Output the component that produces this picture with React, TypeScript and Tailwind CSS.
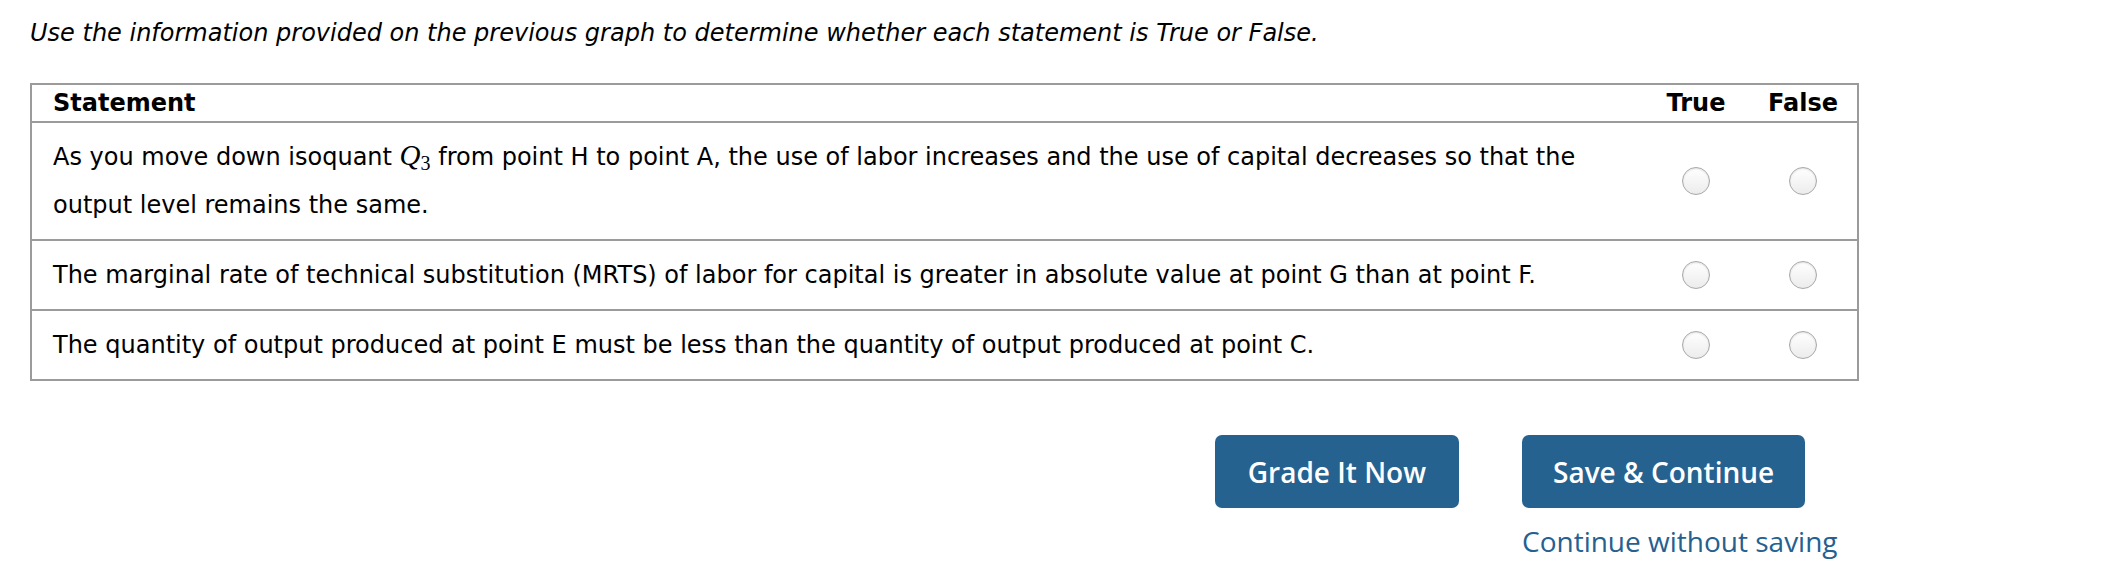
import React from 'react'

const rows = [
  {
    id: 'r1',
    text: (
      <>
        As you move down isoquant{' '}
        <span className="font-['Liberation_Serif',serif] text-[29px] leading-none">
          <i>Q</i>
          <sub className="text-[20px] not-italic leading-none">3</sub>
        </span>{' '}
        from point H to point A, the use of labor increases and the use of capital decreases so that the output level
        remains the same.
      </>
    ),
  },
  {
    id: 'r2',
    text: 'The marginal rate of technical substitution (MRTS) of labor for capital is greater in absolute value at point G than at point F.',
  },
  {
    id: 'r3',
    text: 'The quantity of output produced at point E must be less than the quantity of output produced at point C.',
  },
]

function Radio() {
  return (
    <span
      className="inline-block h-[28px] w-[28px] rounded-full border border-[#a9a9a9] bg-gradient-to-b from-white to-[#ececec] shadow-[inset_0_1px_2px_rgba(0,0,0,0.12)]"
      aria-hidden="true"
    ></span>
  )
}

export default function App() {
  return (
    <div className="min-h-[562px] bg-white pl-[30px] pt-[16px] text-black font-['DejaVu_Sans',Verdana,sans-serif]">
      <p className="text-[24px] italic leading-[34px]">
        Use the information provided on the previous graph to determine whether each statement is True or False.
      </p>

      <div className="mt-[33px] w-[1829px]">
        <table className="w-full border-collapse border-2 border-[#9b9b9b] text-[24px]">
          <thead>
            <tr className="border-b-2 border-[#9b9b9b]">
              <th className="h-[37px] pl-[21px] text-left font-bold">Statement</th>
              <th className="w-[106px] text-center font-bold">True</th>
              <th className="w-[109px] text-center font-bold">False</th>
            </tr>
          </thead>
          <tbody>
            {rows.map(row => (
              <tr key={row.id} className="border-b-2 border-[#9b9b9b]">
                <td className="py-[10px] pl-[21px] pr-[30px] leading-[48px]">{row.text}</td>
                <td className="text-center align-middle">
                  <div className="flex justify-center">
                    <Radio />
                  </div>
                </td>
                <td className="text-center align-middle">
                  <div className="flex justify-center">
                    <Radio />
                  </div>
                </td>
              </tr>
            ))}
          </tbody>
        </table>
      </div>

      <div className="mt-[54px] flex w-[1829px] justify-end gap-[63px] pr-[25px] font-['Open_Sans',sans-serif]">
        <button className="h-[73px] rounded-[7px] bg-[#26628f] px-[33px] text-[28px] font-semibold text-white">
          Grade It Now
        </button>
        <div className="flex w-[312px] flex-col items-start">
          <button className="h-[73px] rounded-[7px] bg-[#26628f] px-[31px] text-[28px] font-semibold text-white">
            Save &amp; Continue
          </button>
          <a href="#" className="mt-[14px] whitespace-nowrap text-[28px] leading-[38px] text-[#25608f]">
            Continue without saving
          </a>
        </div>
      </div>
    </div>
  )
}
